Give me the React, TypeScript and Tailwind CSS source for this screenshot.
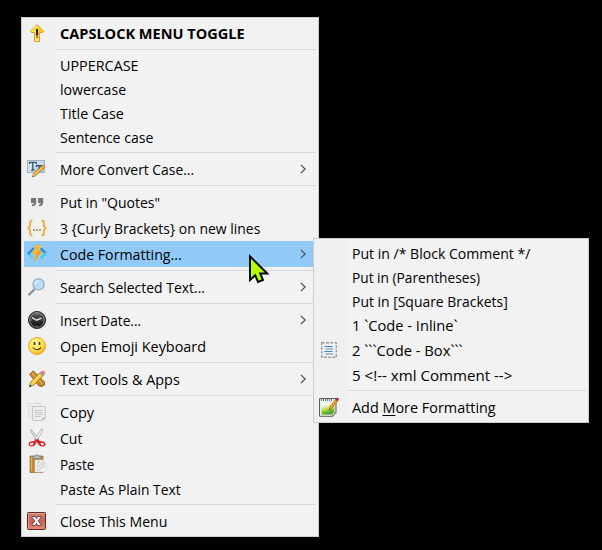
import { useLayoutEffect, useRef, useState } from "react";
import type { ReactNode } from "react";

type Entry =
  | { kind: "separator" }
  | {
      kind: "item";
      label: string;
      width: number;
      icon?: ReactNode;
      bold?: boolean;
      short?: boolean;
      submenu?: boolean;
      active?: boolean;
      accessKey?: string;
    };

function Svg({ children }: { children: ReactNode }) {
  return (
    <svg width="20" height="20" viewBox="0 0 20 20" fill="none" className="block overflow-visible">
      {children}
    </svg>
  );
}

const ArrowIcon = () => (
  <Svg>
    <defs>
      <linearGradient id="arrow" x1="0" y1="0" x2="0" y2="1">
        <stop offset="0" stopColor="#ffdf2b" />
        <stop offset=".5" stopColor="#ffc41a" />
        <stop offset="1" stopColor="#ffe9a8" />
      </linearGradient>
    </defs>
    <path d="M10 1.6 16.6 8.4 15.6 9.5H12.5V18.5H7.5V9.5H4.4L3.4 8.4Z" fill="url(#arrow)" stroke="#dc9a25" />
    <path d="M10 3 5 8.2H8.7V15" stroke="#fff04f" strokeWidth="1.3" />
    <path d="M9 6h2v6l-1 1-1-1Z" fill="#29220d" />
    <path d="M9.2 13.5h1.6v1.3H9.2Z" fill="#403416" />
  </Svg>
);

const ConvertIcon = () => (
  <Svg>
    <defs>
      <linearGradient id="convert" x1="0" y1="0" x2="1" y2="1">
        <stop stopColor="#edf5fb" />
        <stop offset="1" stopColor="#a7bfd3" />
      </linearGradient>
    </defs>
    <rect x=".5" y="1.5" width="17" height="12" fill="url(#convert)" stroke="#9db3c4" />
    <path d="M2.5 5V3.3h6.7V5M5.8 3.5v7.2M4.4 11h3M9.5 8V6.6h5V8M12 7v4" stroke="#34516e" strokeWidth="1.3" />
    <path d="m5.3 18 1-3.2 9.4-8.4 2 2-9.3 8.5Z" fill="#efa52f" stroke="#b87524" strokeWidth=".7" />
    <path d="m5.3 18 1-3 2 1.8Z" fill="#ddbd93" />
    <path d="m15.2 6.8 1.4-1.4q1.8-.2 2 1.8l-1.3 1.4Z" fill="#d99295" />
    <path d="m5.3 18 .5-1.3.8.7Z" fill="#333" />
    <path d="m7.3 15.5 8.1-7.2" stroke="#ffdb72" />
  </Svg>
);

const QuoteIcon = () => (
  <Svg>
    <path d="M4 6h5.2v4.5Q9.2 14.2 5 14.2v-1.8q1.8-.2 1.8-1.4H4Zm7 0h5.2v4.5q0 3.7-4.2 3.7v-1.8q1.8-.2 1.8-1.4H11Z" fill="#777" />
  </Svg>
);

const BracesIcon = () => (
  <Svg>
    <path d="M5.4 2.8H4.7Q3 2.8 3 4.8V7.5Q3 9.6.6 10 3 10.4 3 12.5V15.2Q3 17.2 4.7 17.2H5.4" stroke="#edb13d" strokeWidth="2" />
    <path d="M14.6 2.8h.7Q17 2.8 17 4.8V7.5Q17 9.6 19.4 10 17 10.4 17 12.5V15.2Q17 17.2 15.3 17.2h-.7" stroke="#edb13d" strokeWidth="2" />
    <path d="M6 11h2v2H6Zm3 0h2v2H9Zm3 0h2v2h-2Z" fill="#aaa083" />
  </Svg>
);

const CodeIcon = () => (
  <Svg>
    <path d="M1 9.2 6 14" stroke="#55cdf3" strokeWidth="2.4" />
    <path d="M6.8 4.2 1 10" stroke="#268cdd" strokeWidth="2.4" />
    <path d="m13.6 4.4 5.4 5.2" stroke="#2789df" strokeWidth="2.4" />
    <path d="m19 9-5.2 5.2" stroke="#45cbf1" strokeWidth="2.4" />
    <path d="M9 1h5.3L11.5 7h4L6.6 18l2.6-7.8H5Z" fill="#fbbb27" />
    <path d="M11.5 7h4L6.6 18l2.6-7.8Z" fill="#f2a21e" />
  </Svg>
);

const SearchIcon = () => (
  <Svg>
    <path d="m7.5 12.3-6 5.9" stroke="#81909b" strokeWidth="2.3" />
    <circle cx="11.6" cy="7.4" r="5.6" fill="#b9dff8" stroke="#8eabbe" strokeWidth="1.2" />
    <path d="M8 7q.5-3 3.8-3.4" stroke="#e2f4ff" strokeWidth="1.3" />
  </Svg>
);

const ClockIcon = () => (
  <Svg>
    <defs>
      <linearGradient id="clock" x1="0" y1="0" x2="0" y2="1">
        <stop stopColor="#666" />
        <stop offset=".5" stopColor="#333" />
        <stop offset="1" stopColor="#080808" />
      </linearGradient>
    </defs>
    <circle cx="10" cy="10" r="8.5" fill="url(#clock)" stroke="#222" />
    <circle cx="10" cy="10" r="7.3" stroke="#a5a5a5" strokeWidth=".7" />
    <path d="m5 7.5 4.5 2.7 5-2" stroke="#eee" strokeWidth="1.3" />
    <path d="M10 3.6v1m0 11v1M3.5 10h1m11 0h1" stroke="#bbb" />
  </Svg>
);

const SmileIcon = () => (
  <Svg>
    <defs>
      <radialGradient id="smile" cx=".4" cy=".3" r=".75">
        <stop stopColor="#fff899" />
        <stop offset=".6" stopColor="#ffe348" />
        <stop offset="1" stopColor="#f7a81b" />
      </radialGradient>
    </defs>
    <circle cx="10" cy="10" r="8.5" fill="url(#smile)" stroke="#eba02b" />
    <path d="M7.5 6v3m5-3v3" stroke="#4c351a" strokeWidth="1.7" />
    <path d="M5.8 11.5q4 4.5 8.4 0" stroke="#4c351a" strokeWidth="1.1" />
  </Svg>
);

const ToolsIcon = () => (
  <Svg>
    <path d="m2.5 5.3 3.8-3.5L17.5 13v3L15 17.5l-3-.5Z" fill="#c88530" stroke="#805522" strokeWidth=".8" />
    <path d="m4.8 4.2 10.4 10.6" stroke="#eeb756" strokeWidth="1.2" />
    <path d="m2.5 17.5 1-4.2L13.7 3l3 3L6.8 16.3Z" fill="#f5cb3d" stroke="#8b6d20" strokeWidth=".8" />
    <path d="m5 13.8 9.2-9.2" stroke="#fff08a" />
    <path d="m12.6 4.2 1.8-1.9 3.2 3-1.9 2Z" fill="#9ca19c" />
    <path d="m14 2.7 1.1-.9q3.3-.1 3 3l-1.2 1.1Z" fill="#ed7788" />
    <path d="m2.5 17.5 1-4 3 2.8Z" fill="#dfbd82" />
    <path d="m2.3 18 .6-2.5 1.9 1.7Z" fill="#222" />
  </Svg>
);

const CopyIcon = () => (
  <Svg>
    <path d="M1.5 1.5h12v14h-12Z" fill="#eee" stroke="#ddd" />
    <path d="M3 4.5h8M3 7.5h3M3 10.5h3" stroke="#ddd" />
    <path d="M5.5 4.5h12.8v11.7l-2.6 2.3H5.5Z" fill="#ededed" stroke="#c5c5c5" />
    <path d="M7.5 8.5h8m-8 2h8m-8 2h8m-8 2h6" stroke="#c6c6c6" />
    <path d="M15.5 18.3v-2.6h2.7Z" fill="#aaa" />
  </Svg>
);

const CutIcon = () => (
  <Svg>
    <path d="M4 1.2 3.8 4 10.5 13l1.4-1.7Z" fill="#ddd" stroke="#aaa" strokeWidth=".8" />
    <path d="M14.8.5 15.7 3 9.2 13.2l-1.5-2Z" fill="#f4f4f4" stroke="#aaa" strokeWidth=".8" />
    <path d="m8.8 10.7 2.1 1.4-2 3.3q-1 3-4.3 3.1-3 .2-3.1-2.2.3-3 4-3 2 .1 3.3-2.6Z" fill="#d42e35" />
    <path d="m10.8 10.7-2 1.5 2.2 3.2q1.2 3 4.5 3.1 3 .1 3-2.2-.2-3-4-3-2 .1-3.7-2.6Z" fill="#c92129" />
    <ellipse cx="4.7" cy="16" rx="1.8" ry="1.1" transform="rotate(-25 4.7 16)" fill="#f0f0f0" />
    <ellipse cx="15.2" cy="16" rx="1.8" ry="1.1" transform="rotate(25 15.2 16)" fill="#f0f0f0" />
    <circle cx="9.8" cy="11.8" r=".7" fill="#888" />
  </Svg>
);

const PasteIcon = () => (
  <Svg>
    <path d="M3 2h13v16.5H3Z" fill="#bd852e" stroke="#9b6b25" strokeWidth=".7" />
    <path d="M4.5 3v14" stroke="#dfad55" strokeWidth="1.3" />
    <path d="M5.5 4.5V2.5h2Q8 .7 10 1q2 0 2.3 1.5h2v2Z" fill="#b5b9bb" stroke="#747b80" strokeWidth=".7" />
    <path d="M8 6h9.5l1.3 1.4v7.8L16.5 18H8Z" fill="#fafafa" stroke="#ccc" strokeWidth=".6" />
    <path d="M9.5 8h4m1 0h3m-8 2h2m1 0h5m-8 2h4m1 0h3m-8 2h2m1 0h4m-7 2h4" stroke="#aaa" strokeWidth=".8" />
  </Svg>
);

const CloseIcon = () => (
  <Svg>
    <defs>
      <linearGradient id="close" x1="0" y1="0" x2="0" y2="1">
        <stop stopColor="#d18473" />
        <stop offset=".5" stopColor="#c56551" />
        <stop offset="1" stopColor="#ef8a6b" />
      </linearGradient>
    </defs>
    <rect x=".5" y="1.5" width="18" height="17" rx="1" fill="url(#close)" stroke="#582b30" />
    <path d="M1.5 17.5v-15h16" stroke="#f0aa98" strokeOpacity=".7" />
    <path d="M5 5.5h3.3l1.2 2 1.2-2H14v1.8h-.8L11.3 10l2 2.7h.7v1.8h-3.3l-1.2-2-1.2 2H5v-1.8h.7l2-2.7-2-2.7H5Z" fill="#eee" stroke="#65403e" strokeWidth=".9" />
  </Svg>
);

const CodeBoxIcon = () => (
  <Svg>
    <path d="M2.7 2.7h14.6v14.6H2.7Z" stroke="#9b9ea0" strokeWidth="1.4" strokeDasharray="3 1.3" />
    <path d="M5.5 6.5h8m-8 5h8" stroke="#4486b7" strokeWidth="1.2" />
    <path d="M6.5 9h8m-8 5h8" stroke="#5a91b9" strokeWidth="1.2" />
  </Svg>
);

const NoteIcon = () => (
  <Svg>
    <defs>
      <linearGradient id="note" x1="0" y1="0" x2=".3" y2="1">
        <stop offset=".2" stopColor="#fbfff0" />
        <stop offset=".65" stopColor="#a4dc3c" />
        <stop offset="1" stopColor="#3d9f25" />
      </linearGradient>
    </defs>
    <path d="M.5 1.5H17v14l-3.2 3.8H.5Z" fill="#e9eee8" stroke="#59615e" />
    <path d="M2.5 6h13v8l-3 3.5h-10Z" fill="url(#note)" />
    <path d="M2 3h12" stroke="#747b76" strokeWidth="2" strokeDasharray="1 1" />
    <path d="m16.5 15.5-3 3.5v-3.5Z" fill="#f6f6e9" stroke="#718070" strokeWidth=".7" />
    <path d="m10.2 13.3.8-3.5 6.2-8 2 1.4-6.2 8Z" fill="#f0a52c" stroke="#a66b25" strokeWidth=".7" />
    <path d="m16.3 2.7 1.8-2.3 2.1 1.3-1.9 2.5Z" fill="#ad272d" />
    <path d="m10.2 13.3.6-1.8 1.2.8Z" fill="#333" />
  </Svg>
);

const separator: Entry = { kind: "separator" };

const mainEntries: Entry[] = [
  { kind: "item", label: "CAPSLOCK MENU TOGGLE", width: 185, bold: true, icon: <ArrowIcon /> },
  separator,
  { kind: "item", label: "UPPERCASE", width: 78.5, short: true },
  { kind: "item", label: "lowercase", width: 66, short: true },
  { kind: "item", label: "Title Case", width: 64, short: true },
  { kind: "item", label: "Sentence case", width: 93, short: true },
  separator,
  { kind: "item", label: "More Convert Case...", width: 134, icon: <ConvertIcon />, submenu: true },
  separator,
  { kind: "item", label: 'Put in "Quotes"', width: 100, icon: <QuoteIcon /> },
  { kind: "item", label: "3 {Curly Brackets} on new lines", width: 200, icon: <BracesIcon /> },
  { kind: "item", label: "Code Formatting...", width: 122, icon: <CodeIcon />, submenu: true, active: true },
  separator,
  { kind: "item", label: "Search Selected Text...", width: 145, icon: <SearchIcon />, submenu: true },
  separator,
  { kind: "item", label: "Insert Date...", width: 81, icon: <ClockIcon />, submenu: true },
  { kind: "item", label: "Open Emoji Keyboard", width: 146, icon: <SmileIcon /> },
  separator,
  { kind: "item", label: "Text Tools & Apps", width: 120, icon: <ToolsIcon />, submenu: true },
  separator,
  { kind: "item", label: "Copy", width: 34, icon: <CopyIcon /> },
  { kind: "item", label: "Cut", width: 22.5, icon: <CutIcon /> },
  { kind: "item", label: "Paste", width: 34, icon: <PasteIcon /> },
  { kind: "item", label: "Paste As Plain Text", width: 121, short: true },
  separator,
  { kind: "item", label: "Close This Menu", width: 107, icon: <CloseIcon /> },
];

const formattingEntries: Entry[] = [
  { kind: "item", label: "Put in /* Block Comment */", width: 178, short: true },
  { kind: "item", label: "Put in (Parentheses)", width: 128, short: true },
  { kind: "item", label: "Put in [Square Brackets]", width: 156, short: true },
  { kind: "item", label: "1 `Code - Inline`", width: 105.5, short: true },
  { kind: "item", label: "2 ```Code - Box```", width: 111, icon: <CodeBoxIcon /> },
  { kind: "item", label: "5 <!-- xml Comment -->", width: 160, short: true },
  separator,
  { kind: "item", label: "Add More Formatting", width: 144, icon: <NoteIcon />, accessKey: "M" },
];

// Condenses a label horizontally so that it fills its column width.
function Label({ text, width, bold, accessKey }: { text: string; width: number; bold?: boolean; accessKey?: string }) {
  const ref = useRef<HTMLSpanElement>(null);
  const [scale, setScale] = useState(1);
  useLayoutEffect(() => {
    if (ref.current) setScale(width / ref.current.offsetWidth);
  }, [width]);
  const at = accessKey ? text.indexOf(accessKey) : -1;
  return (
    <span className="block whitespace-pre" style={{ width }}>
      <span
        ref={ref}
        className={`inline-block origin-left ${bold ? "font-bold" : "font-normal"}`}
        style={scale === 1 ? undefined : { transform: `scaleX(${scale})` }}
      >
        {at < 0 ? (
          text
        ) : (
          <>
            {text.slice(0, at)}
            <span className="underline decoration-1 underline-offset-2">{accessKey}</span>
            {text.slice(at + 1)}
          </>
        )}
      </span>
    </span>
  );
}

function Menu({ entries }: { entries: Entry[] }) {
  return (
    <div className="border border-[#cccccc] bg-[linear-gradient(to_right,#f0f0f0_34px,#f2f2f2_34px)] p-[2px]">
      {entries.map((entry, i) =>
        entry.kind === "separator" ? (
          <div key={i} className="h-[7px] pt-[3px] pl-8">
            <div className="h-px bg-[#d7d7d7]" />
          </div>
        ) : (
          <div
            key={i}
            className={`flex items-center pr-[10px] pl-[3px] ${entry.short ? "h-6" : "h-[26px]"} ${entry.active ? "bg-[#91c9f7]" : ""}`}
          >
            <div className="mr-[13px] h-5 w-5 shrink-0">{entry.icon}</div>
            <Label text={entry.label} width={entry.width} bold={entry.bold} accessKey={entry.accessKey} />
            {entry.submenu && (
              <svg width="6" height="10" viewBox="0 0 6 10" fill="none" className="ml-auto">
                <path d="m.9.8 4.2 4.2L.9 9.2" stroke="#4d4d4d" strokeWidth="1.2" />
              </svg>
            )}
          </div>
        ),
      )}
    </div>
  );
}

export default function App() {
  return (
    <div className="relative h-[550px] w-[602px] overflow-hidden bg-black pt-[17px] pl-[21px] font-['Open_Sans','Noto_Sans',sans-serif] text-[15px] leading-[20px] text-black">
      <div className="w-[298px]">
        <Menu entries={mainEntries} />
      </div>
      <div className="absolute top-[238px] left-[313px] w-[276px]">
        <Menu entries={formattingEntries} />
      </div>
      <svg width="22" height="32" viewBox="0 0 22 32" className="absolute top-[253px] left-[248px]">
        <path d="M2 3.4V27L7.2 22.2 10 29 15 27 12.2 20.6H19.2Z" fill="#b5ff00" stroke="#080808" strokeWidth="2" />
      </svg>
    </div>
  );
}
